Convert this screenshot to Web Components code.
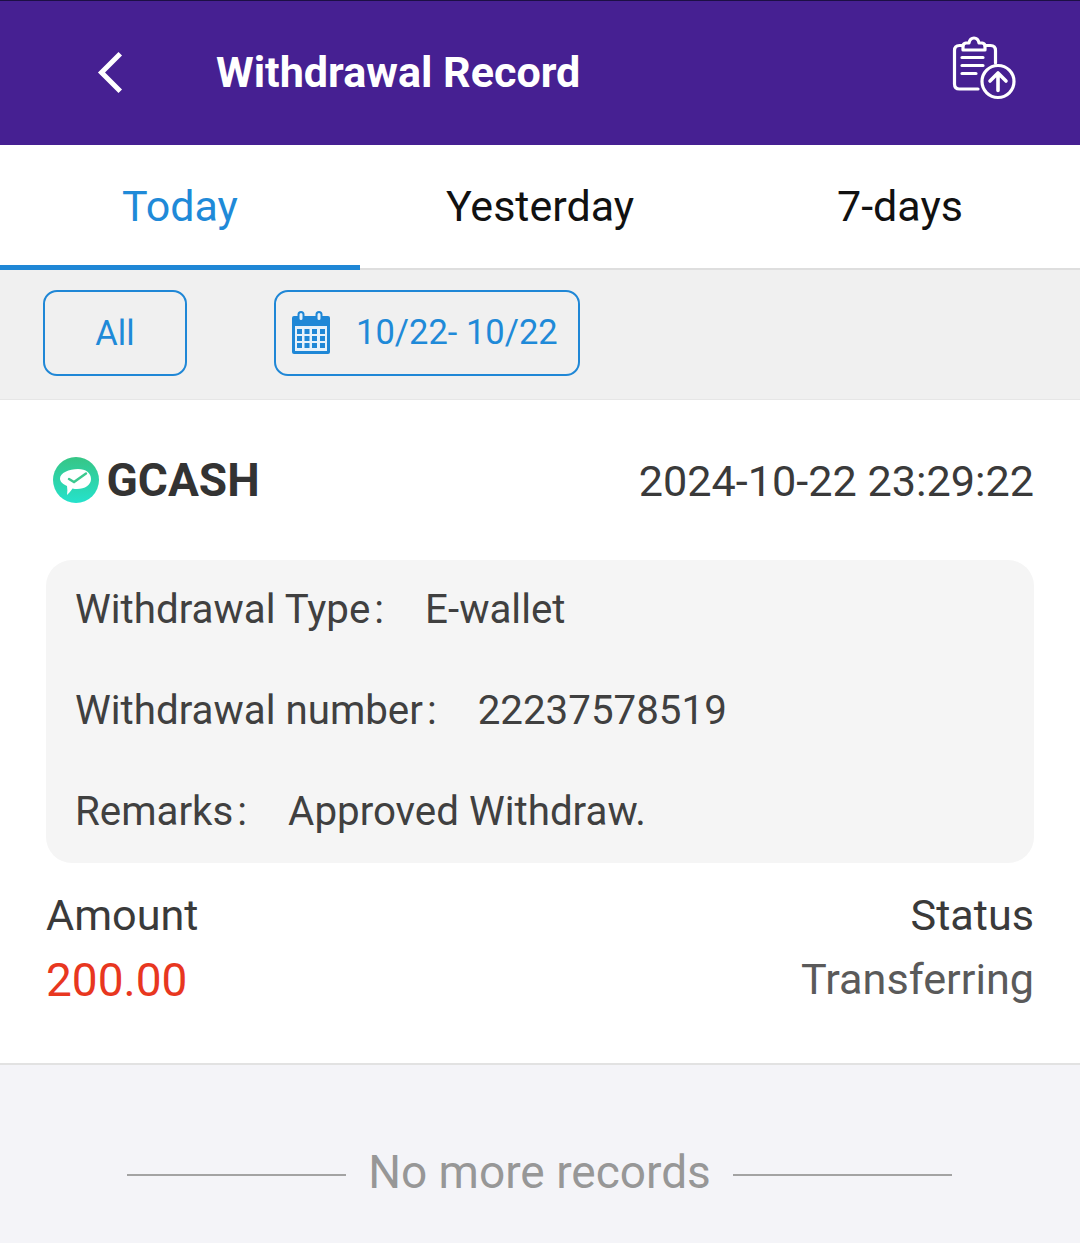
<!DOCTYPE html>
<html>
<head>
<meta charset="utf-8">
<style>
  html, body { margin: 0; padding: 0; background: #f4f4f8; }
  body { font-family: Roboto, "Liberation Sans", sans-serif; }
</style>
</head>
<body>
<record-page>
  <top-bar title="Withdrawal Record"></top-bar>
  <tab-strip></tab-strip>
  <filter-bar range="10/22- 10/22"></filter-bar>
  <record-card channel="GCASH" time="2024-10-22 23:29:22" amount="200.00" state="Transferring">
    <info-row label="Withdrawal Type" value="E-wallet"></info-row>
    <info-row label="Withdrawal number" value="22237578519"></info-row>
    <info-row label="Remarks" value="Approved Withdraw."></info-row>
  </record-card>
  <list-end>No more records</list-end>
</record-page>

<script>
class RecordPage extends HTMLElement {
  constructor() {
    super();
    this.attachShadow({ mode: "open" });
    this.shadowRoot.innerHTML = `
      <style>
        :host { display: flex; flex-direction: column; width: 1080px; height: 1243px; overflow: hidden; background: #f4f4f8; }
        ::slotted(*) { flex: none; }
      </style>
      <slot></slot>`;
  }
}

class TopBar extends HTMLElement {
  constructor() {
    super();
    this.attachShadow({ mode: "open" });
    this.shadowRoot.innerHTML = `
      <style>
        :host { display: flex; align-items: center; height: 144px; border-top: 1px solid #1c0f45; background: #462092; color: #fff; box-sizing: content-box; }
        .back { width: 40px; height: 56px; margin-left: 92px; }
        h1 { margin: 0 0 1px 84px; flex: 1; font-size: 43.1px; line-height: 50px; font-weight: 700; white-space: nowrap; }
        .up { width: 70px; height: 70px; margin-right: 63px; margin-top: -9px; }
      </style>
      <svg class="back" viewBox="0 0 40 56" fill="none" stroke="#fff" stroke-width="5" stroke-linecap="square">
        <path d="M26.5 10.5 L9.5 27.5 L26.5 44.5"/>
      </svg>
      <h1>${this.getAttribute("title")}</h1>
      <svg class="up" viewBox="0 0 70 70" fill="none" stroke="#fff" stroke-width="3.2" stroke-linecap="round" stroke-linejoin="round">
        <path d="M16 11.5 H12.5 Q7.5 11.5 7.5 16.5 V50 Q7.5 55 12.5 55 H31"/>
        <path d="M38 11.5 H43.5 Q48.5 11.5 48.5 16.5 V29"/>
        <path d="M16 16 V12 Q16 9.5 19 9 H22 Q23 4 27 4 Q31 4 32 9 H35 Q38 9.5 38 12 V16 Z"/>
        <path d="M15 23.5 H36 M15 31.5 H36 M15 39.5 H29"/>
        <circle cx="51" cy="47.5" r="16"/>
        <path d="M51 56.5 V39 M43 47 L51 39 L59 47" stroke-width="3.6"/>
      </svg>`;
  }
}

class TabStrip extends HTMLElement {
  constructor() {
    super();
    this.attachShadow({ mode: "open" });
    this.shadowRoot.innerHTML = `
      <style>
        :host { display: grid; grid-template-columns: repeat(3, 360px); height: 125px; box-sizing: border-box; background: #fff; border-bottom: 2px solid #dedede; }
        .tab { display: flex; align-items: center; justify-content: center; height: 125px; padding-bottom: 4px; box-sizing: border-box; font-size: 43px; color: #111; }
        .on { color: #1f8ad8; box-shadow: inset 0 -5px 0 #1f87d6; }
      </style>
      <div class="tab on">Today</div>
      <div class="tab">Yesterday</div>
      <div class="tab">7-days</div>`;
  }
}

class FilterBar extends HTMLElement {
  constructor() {
    super();
    this.attachShadow({ mode: "open" });
    this.shadowRoot.innerHTML = `
      <style>
        :host { display: flex; align-items: center; gap: 87px; height: 130px; padding: 0 0 4px 43px; box-sizing: border-box; background: #f0f0f0; border-bottom: 1px solid #e6e6e6; color: #1f8ad8; font-size: 34.5px; }
        .btn { display: flex; align-items: center; height: 86px; box-sizing: border-box; border: 2px solid #1f87d6; border-radius: 14px; }
        .all { width: 144px; justify-content: center; }
        .all span { margin-top: 1px; }
        .range { width: 306px; padding-left: 15px; gap: 25px; }
        .range span { margin-top: -2px; }
        svg { width: 40px; height: 44px; flex: none; }
      </style>
      <div class="btn all"><span>All</span></div>
      <div class="btn range">
        <svg viewBox="0 0 40 44">
          <path fill="#1f87d6" d="M3 5 H37 Q39 5 39 7 V41 Q39 43 37 43 H3 Q1 43 1 41 V7 Q1 5 3 5 Z"/>
          <rect x="4" y="15" width="32" height="25" fill="#e6f1fa"/>
          <g fill="#e6f1fa" stroke="#1f87d6" stroke-width="2"><rect x="7.5" y="1" width="5" height="9" rx="2.5"/><rect x="25.5" y="1" width="5" height="9" rx="2.5"/></g>
          <g fill="#1f87d6">
            <rect x="6" y="18" width="5" height="5"/><rect x="13.5" y="18" width="5" height="5"/><rect x="21" y="18" width="5" height="5"/><rect x="29" y="18" width="5" height="5"/>
            <rect x="6" y="25" width="5" height="5"/><rect x="13.5" y="25" width="5" height="5"/><rect x="21" y="25" width="5" height="5"/><rect x="29" y="25" width="5" height="5"/>
            <rect x="6" y="32" width="5" height="5"/><rect x="13.5" y="32" width="5" height="5"/><rect x="21" y="32" width="5" height="5"/><rect x="29" y="32" width="5" height="5"/>
          </g>
        </svg>
        <span>${this.getAttribute("range")}</span>
      </div>`;
  }
}

class InfoRow extends HTMLElement {
  constructor() {
    super();
    this.attachShadow({ mode: "open" });
    this.shadowRoot.innerHTML = `
      <style>
        :host { display: flex; align-items: center; height: 101px; padding-bottom: 2px; box-sizing: border-box; font-size: 40.3px; color: #404040; white-space: nowrap; }
        .c { margin: 0 41px 0 4px; }
      </style>
      <span>${this.getAttribute("label")}</span><span class="c">:</span>
      <span>${this.getAttribute("value")}</span>`;
  }
}

class RecordCard extends HTMLElement {
  constructor() {
    super();
    this.attachShadow({ mode: "open" });
    this.shadowRoot.innerHTML = `
      <style>
        :host { display: block; height: 665px; box-sizing: border-box; background: #fff; border-bottom: 2px solid #e2e2e2; padding: 0 46px; color: #3a3a3a; }
        .head { display: flex; align-items: center; justify-content: space-between; height: 160px; }
        .brand { display: flex; align-items: center; gap: 8px; margin-left: 7px; font-size: 46px; font-weight: 700; color: #333; }
        .brand span { margin-left: -0.5px; }
        .time { font-size: 43.2px; margin-top: 2px; }
        svg { width: 46px; height: 46px; }
        .box { height: 303px; box-sizing: border-box; padding: 0 29px; background: #f5f5f5; border-radius: 26px; }
        .foot { display: grid; grid-template-columns: 1fr 1fr; font-size: 43.2px; margin-top: 21px; line-height: 64px; }
        .r { text-align: right; }
        .amt { color: #e8371f; font-size: 46px; }
        .st { color: #5a5a5a; }
      </style>
      <div class="head">
        <div class="brand">
          <svg viewBox="0 0 46 46">
            <defs><linearGradient id="g" x1="0" y1="0" x2="0" y2="1"><stop offset="0" stop-color="#36c585"/><stop offset="1" stop-color="#25e2cc"/></linearGradient></defs>
            <circle cx="23" cy="23" r="23" fill="url(#g)"/>
            <path fill="#fff" d="M25 12 C33 12 38 16 38 22 C38 28 32 32 24 32 C22.5 32 21 32 19.5 31.5 C18 34 16 36 14 38 C14.5 35 14.5 32 14 29 C10 27 7 25 7 21.5 C7 16 16 12 25 12 Z"/>
            <path fill="none" stroke="#3cc98f" stroke-width="2.4" stroke-linecap="round" d="M16 22 L21 25 L33 16.5"/>
          </svg>
          <span>${this.getAttribute("channel")}</span>
        </div>
        <div class="time">${this.getAttribute("time")}</div>
      </div>
      <div class="box"><slot></slot></div>
      <div class="foot">
        <div>Amount</div><div class="r">Status</div>
        <div class="amt">${this.getAttribute("amount")}</div><div class="r st">${this.getAttribute("state")}</div>
      </div>`;
  }
}

class ListEnd extends HTMLElement {
  constructor() {
    super();
    this.attachShadow({ mode: "open" });
    this.shadowRoot.innerHTML = `
      <style>
        :host { display: flex; align-items: center; justify-content: center; gap: 22px; height: 179px; padding: 35px 1px 0 0; box-sizing: border-box; font-size: 46px; color: #979797; }
        i { width: 219px; height: 2px; margin-top: 6px; background: #a3a3a3; }
      </style>
      <i></i><slot></slot><i></i>`;
  }
}

customElements.define("record-page", RecordPage);
customElements.define("top-bar", TopBar);
customElements.define("tab-strip", TabStrip);
customElements.define("filter-bar", FilterBar);
customElements.define("info-row", InfoRow);
customElements.define("record-card", RecordCard);
customElements.define("list-end", ListEnd);
</script>
</body>
</html>
